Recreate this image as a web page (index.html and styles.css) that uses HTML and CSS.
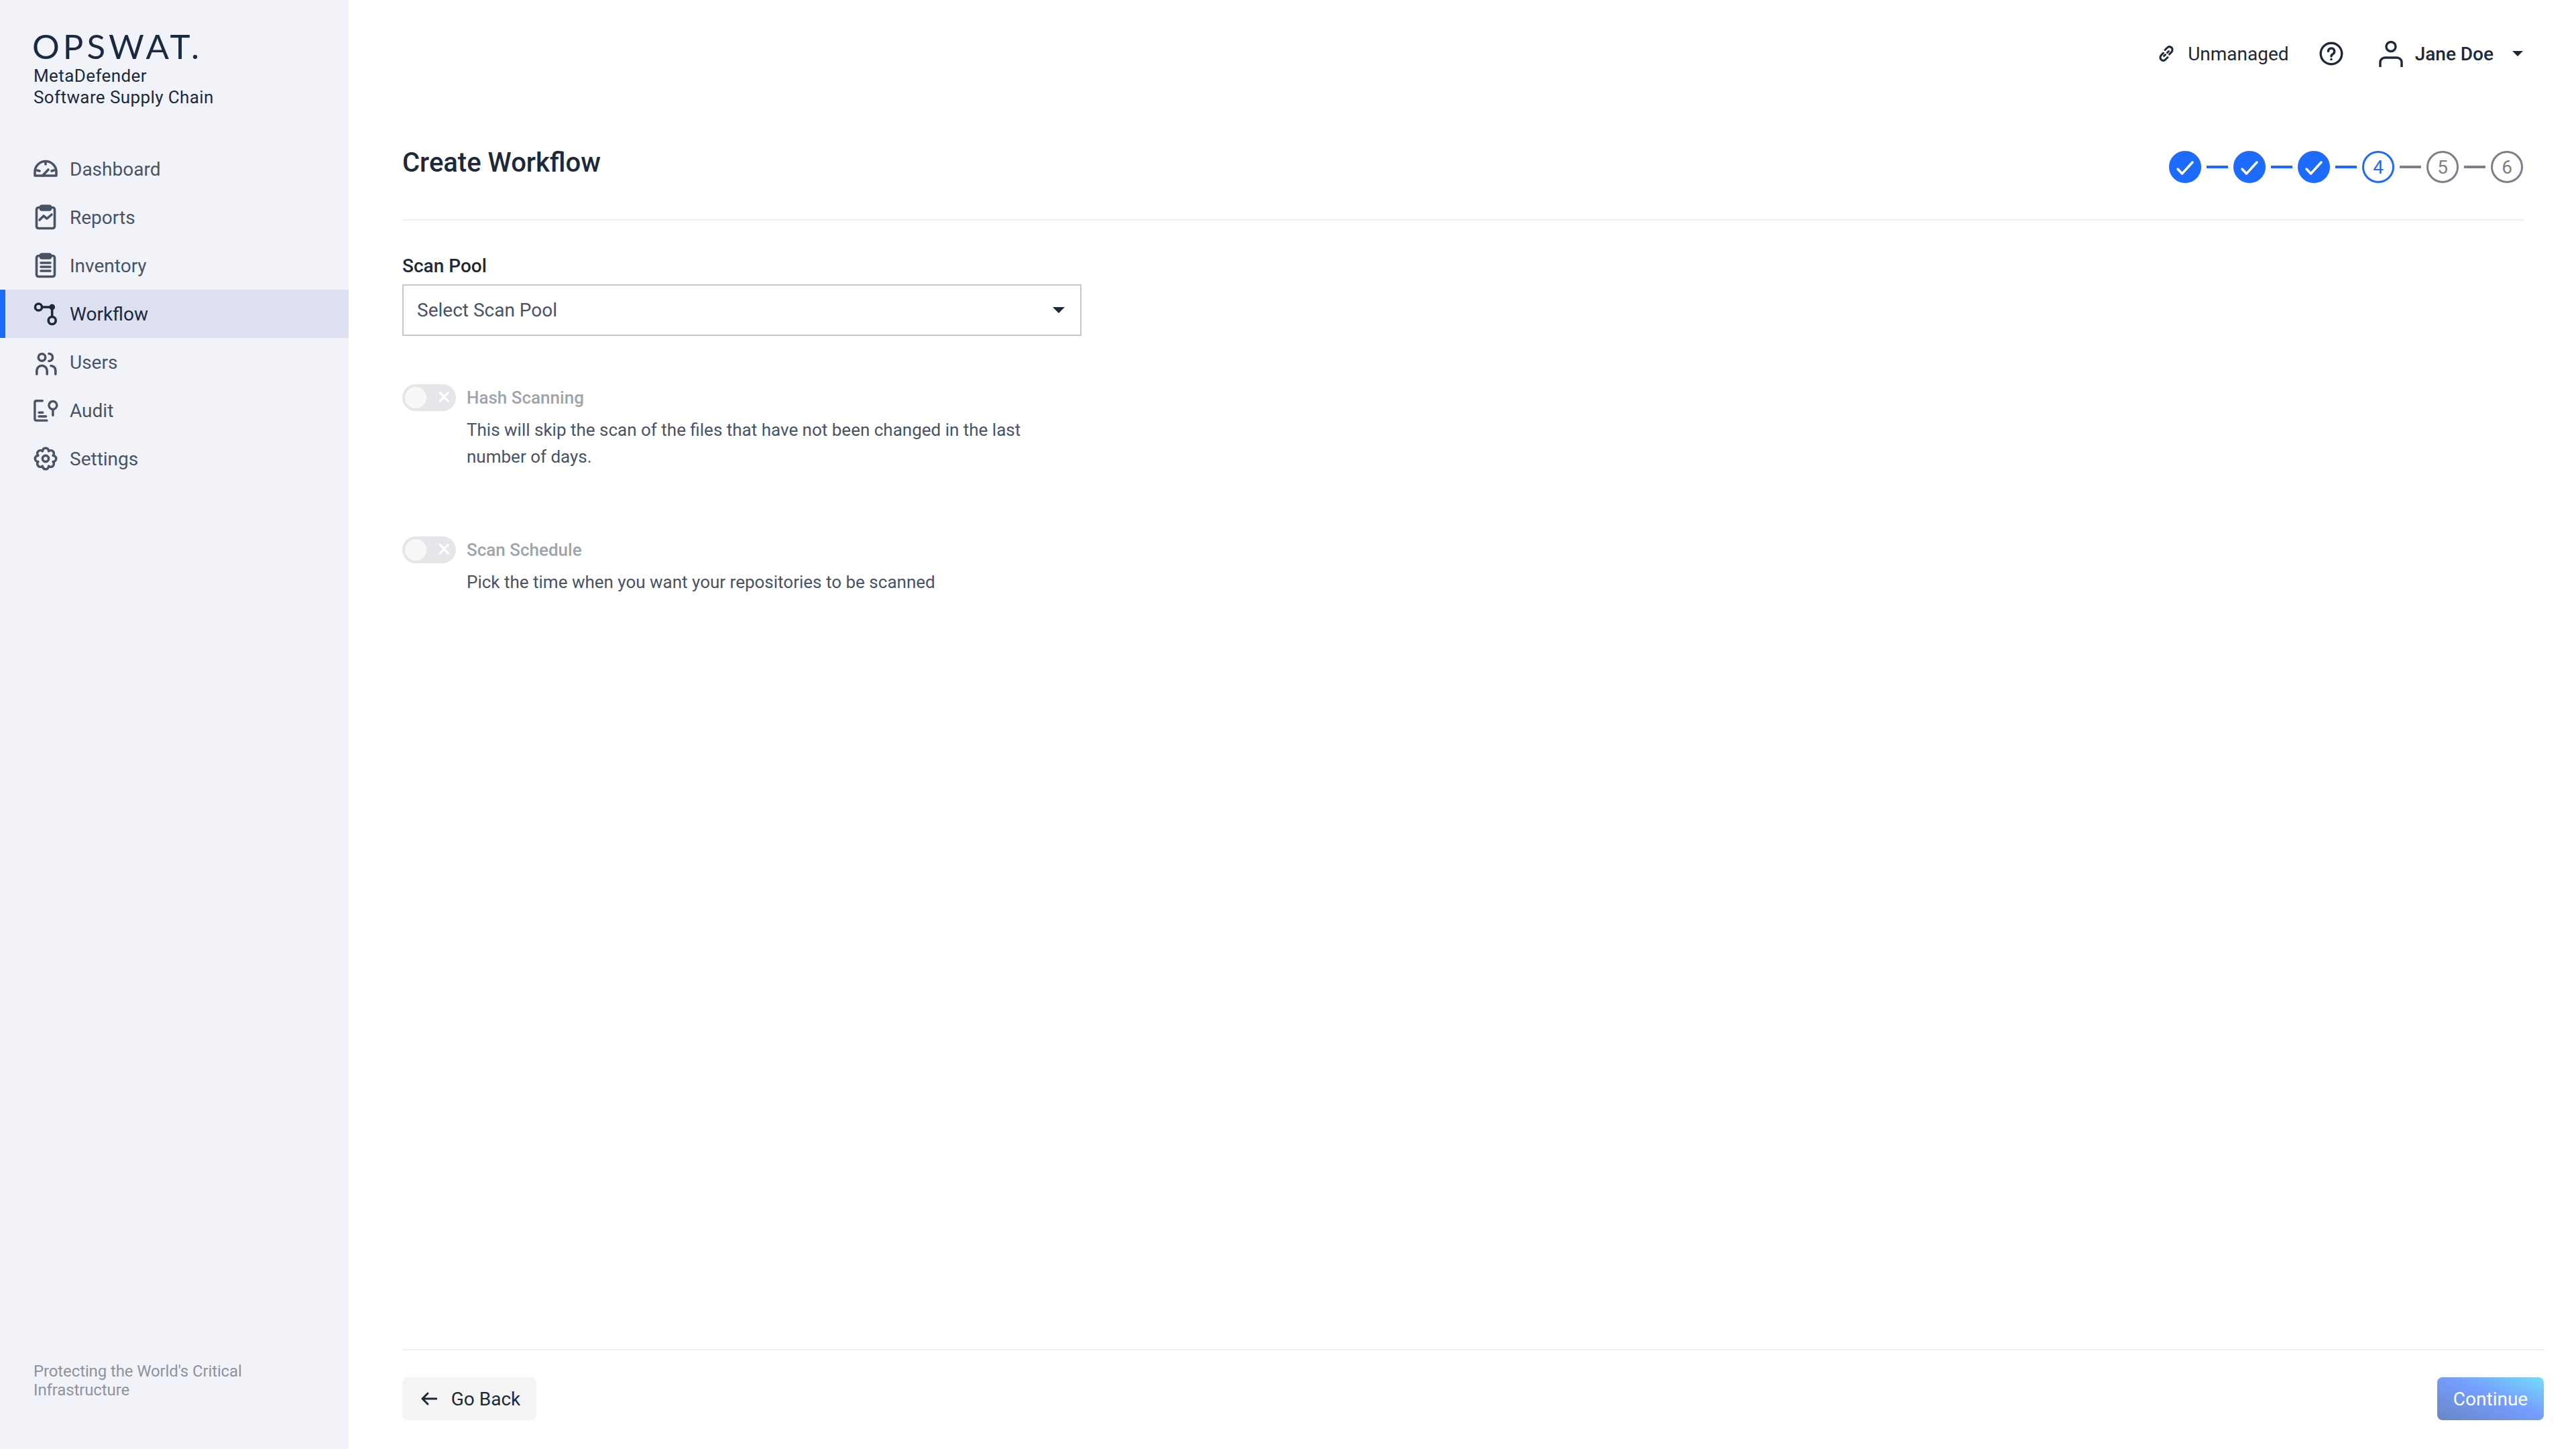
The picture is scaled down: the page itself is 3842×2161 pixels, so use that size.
FILE: index.html
```html
<!DOCTYPE html>
<html lang="en">
<head>
<meta charset="utf-8">
<title>Create Workflow</title>
<link rel="stylesheet" href="styles.css">
</head>
<body>
<div class="app">
  <aside class="sidebar">
    <div class="logo">OPSWAT.</div>
    <div class="brand">MetaDefender<br>Software Supply Chain</div>
    <nav class="nav">
      <a class="nav-item"><svg class="nav-icon" viewBox="0 0 36 36"><path d="M2 22.500A16 16 0 0 1 34 22.500V28H2Z"/><path d="M18 6.500V11M5.500 20l3.500 1M30.500 20l-3.500 1M13.500 28l8.500-9"/></svg>Dashboard</a>
      <a class="nav-item"><svg class="nav-icon" viewBox="0 0 36 36"><rect x="4.500" y="3.500" width="27" height="31" rx="3"/><rect class="solid" x="10.500" y="1" width="15" height="6" rx="2"/><path d="M9 22l6-6 5 4 7-6"/></svg>Reports</a>
      <a class="nav-item"><svg class="nav-icon" viewBox="0 0 36 36"><rect x="4.500" y="3.500" width="27" height="31" rx="3"/><rect class="solid" x="10.500" y="1" width="15" height="6" rx="2"/><path d="M11 14h14M11 20h14M11 26h14"/></svg>Inventory</a>
      <a class="nav-item active"><svg class="nav-icon" viewBox="0 0 36 36"><circle cx="7.500" cy="8" r="5"/><circle cx="27.700" cy="28" r="5.500"/><path d="M12.500 8H27.700V22.500"/><circle class="solid" cx="27.700" cy="8" r="2.600"/></svg>Workflow</a>
      <a class="nav-item"><svg class="nav-icon" viewBox="0 0 36 36"><circle cx="12.500" cy="11" r="5.200"/><path d="M23 5.500a5.500 5.500 0 0 1 0 11M4.800 36V31a7.700 7.700 0 0 1 15.400 0V36M26 23.500a6.800 6.800 0 0 1 6.800 7V36"/></svg>Users</a>
      <a class="nav-item"><svg class="nav-icon" viewBox="0 0 38 36"><path d="M14 3H4.500A2.500 2.500 0 0 0 2 5.500V31.500A2.500 2.500 0 0 0 4.500 34H21"/><circle cx="30.500" cy="10" r="6.300"/><path d="M30.500 16.500V26M8.500 21.500h6M8.500 27.500h11"/></svg>Audit</a>
      <a class="nav-item"><svg class="nav-icon" viewBox="0 0 36 36"><path d="M29.100 22.600A4.600 4.600 0 0 1 22.600 29.100A4.600 4.600 0 0 1 13.400 29.100A4.600 4.600 0 0 1 6.900 22.600A4.600 4.600 0 0 1 6.900 13.400A4.600 4.600 0 0 1 13.400 6.900A4.600 4.600 0 0 1 22.600 6.900A4.600 4.600 0 0 1 29.100 13.400A4.600 4.600 0 0 1 29.100 22.600Z"/><circle cx="18" cy="18" r="4.600"/></svg>Settings</a>
    </nav>
    <div class="tagline">Protecting the World's Critical Infrastructure</div>
  </aside>
  <main class="main">
    <div class="topbar">
      <span class="top-item"><svg class="top-link" viewBox="0 0 26 26"><path d="M11 7.500l3.500-3.500a4.400 4.400 0 0 1 7.500 3.500c0 1.200-.5 2.300-1.300 3.100L17.500 14M15 18.500l-3.500 3.500a4.400 4.400 0 0 1-7.500-3.500c0-1.200.5-2.300 1.300-3.100L8.500 12M9.500 16.500l2-2M14.500 11.500l2-2"/></svg>Unmanaged</span>
      <svg class="top-help" viewBox="0 0 36 36"><circle cx="18" cy="18" r="15.800"/><path d="M13.500 14.500a4.600 4.600 0 1 1 7 4c-1.700 1-2.500 1.800-2.500 3.500"/><circle class="dot" cx="18" cy="26.500" r="1.800"/></svg>
      <svg class="top-user" viewBox="0 0 36 40"><circle cx="18" cy="9.500" r="7"/><path d="M2 40V33a7 7 0 0 1 7-7H27a7 7 0 0 1 7 7V40"/></svg>
      <span class="user-name">Jane Doe</span>
      <span class="caret caret-user"></span>
    </div>
    <header class="page-head">
      <h1 class="title">Create Workflow</h1>
      <div class="stepper">
        <span class="step done"><svg class="check" viewBox="0 0 48 48"><path d="M13 27l6.500 7L35 17"/></svg></span><span class="link on"></span>
        <span class="step done"><svg class="check" viewBox="0 0 48 48"><path d="M13 27l6.500 7L35 17"/></svg></span><span class="link on"></span>
        <span class="step done"><svg class="check" viewBox="0 0 48 48"><path d="M13 27l6.500 7L35 17"/></svg></span><span class="link on"></span>
        <span class="step current">4</span><span class="link"></span>
        <span class="step">5</span><span class="link"></span>
        <span class="step">6</span>
      </div>
    </header>
    <section class="form">
      <label class="field-label">Scan Pool</label>
      <div class="select"><span>Select Scan Pool</span><span class="caret caret-select"></span></div>
      <div class="option option-first">
        <span class="toggle"><span class="knob"></span><span class="cross">×</span></span>
        <div class="option-body">
          <div class="option-title">Hash Scanning</div>
          <p class="option-desc">This will skip the scan of the files that have not been changed in the last number of days.</p>
        </div>
      </div>
      <div class="option option-second">
        <span class="toggle"><span class="knob"></span><span class="cross">×</span></span>
        <div class="option-body">
          <div class="option-title">Scan Schedule</div>
          <p class="option-desc">Pick the time when you want your repositories to be scanned</p>
        </div>
      </div>
    </section>
    <footer class="footer">
      <button class="btn btn-back"><svg class="arrow" viewBox="0 0 24 20"><path d="M23 10H2M10 2l-8 8 8 8"/></svg>Go Back</button>
      <button class="btn btn-next">Continue</button>
    </footer>
  </main>
</div>
</body>
</html>
```
FILE: styles.css
```css
* { box-sizing: border-box; }
html, body { margin: 0; height: 100%; background: #fff; }
body { font-family: Roboto, "Liberation Sans", sans-serif; font-size: 28px; color: #1d2939; overflow: hidden; }
.app { display: flex; height: 2161px; }

.sidebar { width: 520px; flex: none; background: #f2f3f9; display: flex; flex-direction: column; padding-top: 40px; }
.logo { margin-left: 48px; font-family: Lato, sans-serif; font-weight: 400; font-size: 51px; line-height: 57px; letter-spacing: 5px; color: #1a2a40; white-space: nowrap; }
.brand { margin-left: 50px; font-size: 26px; letter-spacing: 0.4px; line-height: 32px; color: #1d2939; font-weight: 400; }
.nav { margin-top: 55px; display: flex; flex-direction: column; }
.nav-item { display: flex; align-items: center; height: 72px; padding-left: 50px; color: #485365; }
.nav-icon { width: 36px; height: 36px; margin-right: 18px; flex: none; fill: none; stroke: #485365; stroke-width: 3.600; stroke-linecap: round; stroke-linejoin: round; overflow: visible; }
.nav-icon .solid { fill: #485365; }
.nav-item.active { background: #dce0f0; box-shadow: inset 8px 0 0 #1d6bfc; color: #1d2939; }
.nav-item.active .nav-icon { stroke: #1d2939; }
.nav-item.active .nav-icon .solid { fill: #1d2939; }
.tagline { margin-top: auto; margin-left: 50px; margin-bottom: 74px; width: 380px; font-size: 24px; letter-spacing: -0.12px; line-height: 28px; color: #8e939b; }

.main { flex: 1; min-width: 0; display: flex; flex-direction: column; padding: 0 48px 0 80px; }
.topbar { height: 160px; display: flex; align-items: center; justify-content: flex-end; margin-right: 31px; color: #1d2939; }
.top-item { display: flex; align-items: center; }
.top-link { width: 26px; height: 26px; margin-right: 19px; fill: none; stroke: #1d2939; stroke-width: 3; stroke-linecap: round; stroke-linejoin: round; }
.top-help { width: 36px; height: 36px; margin-left: 45px; fill: none; stroke: #1d2939; stroke-width: 3.400; stroke-linecap: round; }
.top-help .dot { fill: #1d2939; stroke: none; }
.top-user { width: 36px; height: 40px; margin-left: 53px; fill: none; stroke: #1d2939; stroke-width: 3.400; }
.user-name { margin-left: 18px; font-weight: 500; }
.caret { display: block; width: 0; height: 0; border-style: solid; border-color: #1d2939 transparent transparent; }
.caret-user { margin-left: 28px; border-width: 8px 8px 0; }

.page-head { display: flex; justify-content: space-between; align-items: flex-start; height: 169px; margin-right: 31px; padding-top: 55px; border-bottom: 2px solid #eeeeee; }
.title { margin: 0; font-size: 40px; line-height: 56px; font-weight: 500; color: #1d2939; }
.stepper { display: flex; align-items: center; margin-top: 10px; }
.step { width: 48px; height: 48px; border-radius: 50%; border: 3px solid #7d8088; color: #7d8088; font-size: 28px; display: flex; align-items: center; justify-content: center; }
.step.current { border-color: #1d6bfc; color: #1d6bfc; }
.step.done { background: #1d6bfc; border-color: #1d6bfc; }
.check { width: 48px; height: 48px; flex: none; fill: none; stroke: #fff; stroke-width: 3.500; stroke-linecap: round; stroke-linejoin: round; }
.link { width: 32px; height: 4px; margin: 0 8px; background: #7d8088; }
.link.on { background: #1d6bfc; }

.form { display: flex; flex-direction: column; align-items: flex-start; }
.field-label { margin-top: 48px; line-height: 40px; font-weight: 500; color: #1d2939; }
.select { margin-top: 7px; width: 1013px; height: 77px; border: 2px solid #c5c7cc; padding: 0 23px 0 20px; display: flex; align-items: center; justify-content: space-between; color: #485365; }
.caret-select { border-width: 9px 9px 0; }
.option { display: flex; gap: 16px; }
.option-first { margin-top: 72px; }
.option-second { margin-top: 99px; }
.toggle { position: relative; width: 80px; height: 40px; flex: none; border-radius: 20px; background: #e5e6e9; }
.knob { position: absolute; left: 4px; top: 4px; width: 32px; height: 32px; border-radius: 50%; background: #f8f8f9; }
.cross { position: absolute; right: 8px; top: 0; line-height: 38px; font-size: 36px; color: #fff; }
.option-title { line-height: 40px; font-size: 26px; font-weight: 500; color: #a0a4aa; }
.option-desc { margin: 8px 0 0; width: 860px; font-size: 26px; line-height: 40px; color: #485365; }

.footer { margin-top: auto; height: 149px; flex: none; border-top: 2px solid #eeeeee; padding-top: 40px; display: flex; justify-content: space-between; align-items: flex-start; }
.btn { height: 64px; border: 0; border-radius: 8px; font: inherit; font-size: 28px; display: flex; align-items: center; justify-content: center; padding: 0; }
.btn-back { width: 200px; padding-left: 4px; background: #f4f4f5; color: #1d2939; }
.arrow { width: 24px; height: 20px; margin-right: 21px; fill: none; stroke: #1d2939; stroke-width: 3; stroke-linecap: round; stroke-linejoin: round; }
.btn-next { width: 159px; color: #fff; background: linear-gradient(to top right, #6b85c4 0%, #759eff 55%, #75dcf9 100%); }
```
